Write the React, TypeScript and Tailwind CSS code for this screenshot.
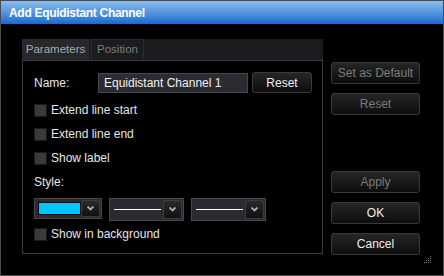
import { FC } from "react";

const font = { fontFamily: '"Liberation Sans", Arial, sans-serif' };

const Chevron: FC = () => (
    <svg width="7" height="5" viewBox="0 0 7 5" className="block">
        <path d="M0.5 0.5 L3.5 3.5 L6.5 0.5" stroke="#b0b0b0" strokeWidth="1.8" fill="none" />
    </svg>
);

const ArrowButton: FC = () => (
    <div className="flex h-full w-[19px] items-center justify-center rounded-[2px] border border-[#3c3c3c] bg-gradient-to-b from-[#2a2a2a] to-[#111111]">
        <Chevron />
    </div>
);

const Check: FC<{ label: string }> = ({ label }) => (
    <div className="flex h-[24px] items-center gap-[4px]">
        <div className="size-[13px] border border-[#1b1b1b] bg-[#3a3a3a]" />
        <span className="text-[12px] text-[#e6e6e6]">{label}</span>
    </div>
);

const SideButton: FC<{ label: string; disabled?: boolean }> = ({ label, disabled }) => (
    <div
        className={`flex h-[22px] w-[89px] items-center justify-center rounded-[3px] border border-[#3a3a3a] bg-gradient-to-b from-[#262626] to-[#0d0d0d] text-[12px] ${
            disabled ? "text-[#7a7a7a]" : "text-[#eeeeee]"
        }`}
    >
        {label}
    </div>
);

const LineSelect: FC = () => (
    <div className="flex h-[23px] w-[75px] items-center justify-between border border-[#46474c] bg-[#2a2b30] pr-[1px]">
        <div className="ml-[4px] h-[1px] w-[47px] bg-white" />
        <div className="h-[19px]">
            <ArrowButton />
        </div>
    </div>
);

const App: FC = () => {
    return (
        <div style={font} className="flex h-[276px] w-[444px] flex-col border border-[#4a4a4a] bg-black">
            <div className="flex h-[23px] shrink-0 items-center bg-gradient-to-b from-[#8cbcea] to-[#166ad0] pl-[8px]">
                <span className="text-[12px] font-bold tracking-[-0.3px] text-white">Add Equidistant Channel</span>
            </div>
            <div className="flex flex-1 pl-[21px] pt-[15px]">
                <div className="flex w-[301px] flex-col">
                    <div className="flex h-[21px] items-end bg-[#1b1c20]">
                        <div className="flex h-[21px] w-[67px] items-center justify-center bg-[#27282c] text-[11.5px] text-[#a8a8a8]">
                            Parameters
                        </div>
                        <div className="ml-[2px] flex h-[21px] w-[53px] items-center justify-center border border-b-0 border-[#2a2b30] bg-[#1b1c20] text-[11.5px] text-[#7c7c7c]">
                            Position
                        </div>
                    </div>
                    <div className="flex h-[194px] flex-col border border-[#3a3a42] pl-[11px] pt-[11px]">
                        <div className="flex h-[21px] items-center">
                            <span className="w-[64px] text-[12px] text-[#e6e6e6]">Name:</span>
                            <div className="flex h-[20px] w-[150px] items-center border border-[#46474c] bg-[#2b2c31] pl-[5px] text-[12px] text-[#f0f0f0]">
                                Equidistant Channel 1
                            </div>
                            <div className="ml-[4px] flex h-[21px] w-[60px] items-center justify-center rounded-[3px] border border-[#3a3a3a] bg-gradient-to-b from-[#262626] to-[#0d0d0d] text-[12px] text-[#f0f0f0]">
                                Reset
                            </div>
                        </div>
                        <div className="mt-[5px] flex flex-col">
                            <Check label="Extend line start" />
                            <Check label="Extend line end" />
                            <Check label="Show label" />
                            <div className="flex h-[24px] items-center text-[12px] text-[#e6e6e6]">Style:</div>
                        </div>
                        <div className="mt-[4px] flex items-start gap-[7px]">
                            <div className="flex h-[21px] w-[68px] items-center justify-between border border-[#46474c] bg-[#2a2b30] pr-[1px]">
                                <div className="ml-[3px] h-[13px] w-[44px] border border-black bg-[#00c8ff]" />
                                <div className="h-[17px]">
                                    <ArrowButton />
                                </div>
                            </div>
                            <LineSelect />
                            <LineSelect />
                        </div>
                        <div className="mt-[1px]">
                            <Check label="Show in background" />
                        </div>
                    </div>
                </div>
                <div className="ml-[8px] flex flex-col pt-[23px]">
                    <SideButton label="Set as Default" disabled />
                    <div className="mt-[9px]">
                        <SideButton label="Reset" disabled />
                    </div>
                    <div className="mt-[56px] flex flex-col gap-[9px]">
                        <SideButton label="Apply" disabled />
                        <SideButton label="OK" />
                        <SideButton label="Cancel" />
                    </div>
                    <svg width="8" height="8" viewBox="0 0 8 8" className="ml-[93px] mt-[1px]">
                        {[
                            [6, 0],
                            [4, 2],
                            [6, 2],
                            [2, 4],
                            [4, 4],
                            [6, 4],
                            [0, 6],
                            [2, 6],
                            [4, 6],
                            [6, 6],
                        ].map(([x, y]) => (
                            <rect key={`${x}-${y}`} x={x} y={y} width="1" height="1" fill="#777" />
                        ))}
                    </svg>
                </div>
            </div>
        </div>
    );
};

export default App;
